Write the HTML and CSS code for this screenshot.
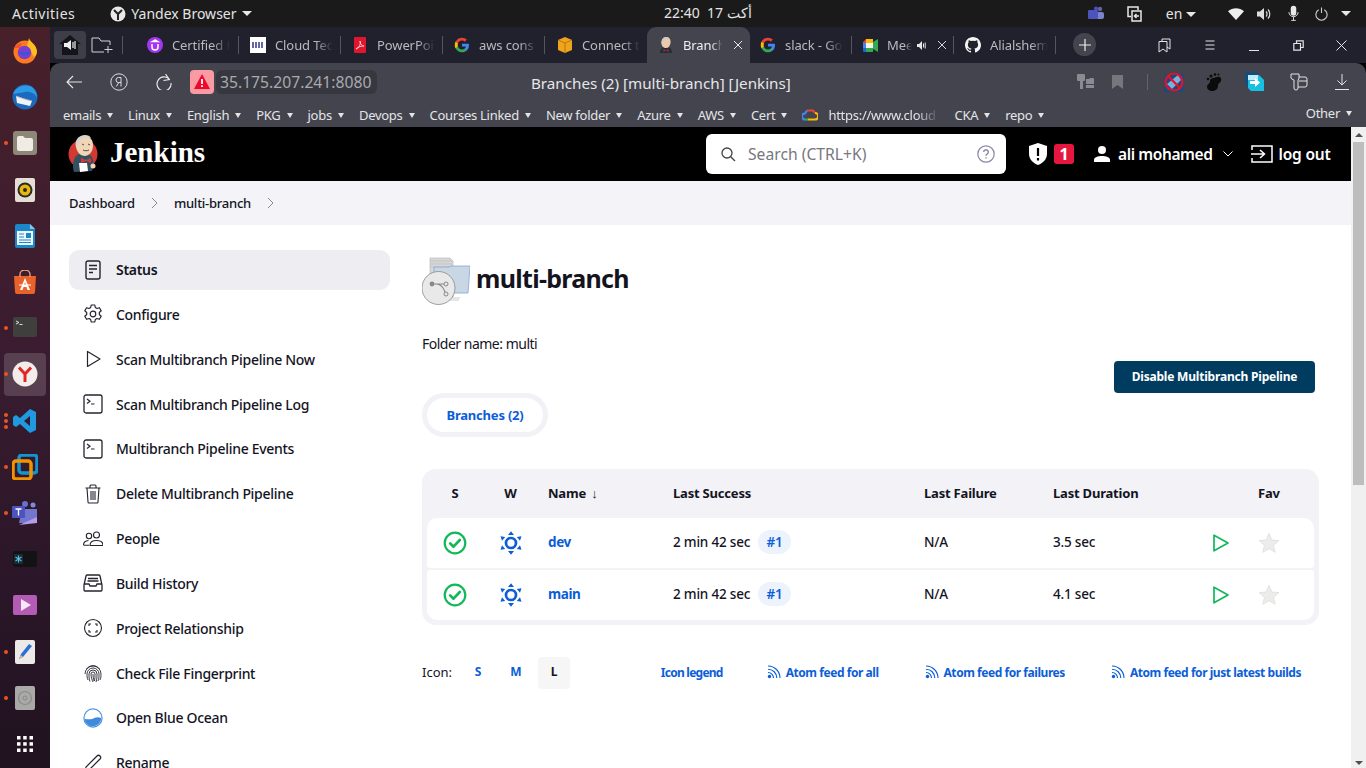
FILE: index.html
```html
<!DOCTYPE html>
<html lang="en">
<head>
    <meta charset="UTF-8">
    <meta name="viewport" content="width=device-width, initial-scale=1.0">
    <title>Branches (2) [multi-branch] [Jenkins]</title>
    <link rel="stylesheet" href="styles.css">
</head>
<body>
    <svg class="defs" width="0" height="0">
        <symbol id="g-logo" viewBox="0 0 48 48">
            <path fill="#4285f4" d="M45 24.500c0-1.600-.1-3.100-.4-4.500H24v8.500h11.800c-.5 2.700-2.100 5-4.400 6.600v5.500h7.100C42.600 36.800 45 31.200 45 24.500z"/>
            <path fill="#34a853" d="M24 46c5.900 0 10.900-2 14.500-5.300l-7.100-5.500c-2 1.300-4.500 2.100-7.400 2.100-5.700 0-10.500-3.800-12.200-9H4.500v5.700C8.100 41.100 15.500 46 24 46z"/>
            <path fill="#fbbc05" d="M11.800 28.300c-.9-2.700-.9-5.800 0-8.500V14H4.500c-3 6-3 13.700 0 19.900l7.300-5.600z"/>
            <path fill="#ea4335" d="M24 10.800c3.200 0 6.100 1.100 8.400 3.300l6.300-6.300C34.900 4.200 29.900 2 24 2 15.500 2 8.100 6.900 4.500 14l7.300 5.700c1.700-5.100 6.500-8.900 12.200-8.900z"/>
        </symbol>
        <symbol id="rss" viewBox="0 0 14 14">
            <circle cx="2.500" cy="11.500" r="1.700" fill="currentColor"/>
            <path d="M1 7.500a5.500 5.500 0 0 1 5.500 5.500M1 4.200A8.800 8.800 0 0 1 9.800 13M1 1a12 12 0 0 1 12 12" fill="none" stroke="currentColor" stroke-width="1.150"/>
        </symbol>
        <symbol id="ok" viewBox="0 0 24 24">
            <circle cx="12" cy="12" r="10.300" fill="none" stroke="#11b85a" stroke-width="2.200"/>
            <path d="M7.200 12.400l3.300 3.300 6.300-6.700" fill="none" stroke="#11b85a" stroke-width="2.700" stroke-linecap="round" stroke-linejoin="round"/>
        </symbol>
        <symbol id="sun" viewBox="0 0 24 24">
            <circle cx="12" cy="12" r="5" fill="none" stroke="#0b5ed8" stroke-width="2.700"/>
            <path fill="#0b5ed8" d="M12 .3l3 3.700H9zM12 23.700L9 20h6zM1.500 5.300l4.700.7L3 9.800zM22.500 5.300l-4.700.7 3.200 3.800zM1.500 18.700L3 14.200 6.200 18zM22.500 18.700L21 14.200 17.800 18z"/>
        </symbol>
        <symbol id="play" viewBox="0 0 18 20">
            <path d="M2 2.200v15.600l14-7.800z" fill="none" stroke="#11b85a" stroke-width="1.700" stroke-linejoin="round"/>
        </symbol>
        <symbol id="star" viewBox="0 0 24 24">
            <path d="M12 1.500l3.100 7.200 7.700.7-5.800 5.200 1.700 7.600-6.700-4-6.700 4L7 14.600 1.200 9.400l7.700-.7z" fill="#ececea" stroke="#dcdcda" stroke-width=".8"/>
        </symbol>
        <symbol id="term" viewBox="0 0 20 20">
            <rect x="1" y="1" width="18" height="18" rx="2" fill="none" stroke="currentColor" stroke-width="1.300"/>
            <path d="M4 5l3 2.300L4 9.500M8 10h3.500" fill="none" stroke="currentColor" stroke-width="1.200"/>
        </symbol>
    </svg>

    <div class="topbar">
        <span class="activities">Activities</span>
        <span class="app-menu">
            <svg width="16" height="16" viewBox="0 0 16 16"><circle cx="8" cy="8" r="7.500" fill="#e8e8e8"/><path d="M4 4l4 4 4-4M8 8v6" stroke="#222" stroke-width="2" fill="none"/></svg>
            Yandex Browser <i class="caret"></i>
        </span>
        <span class="clock">22:40 &nbsp;17 أكت</span>
        <div class="tray">
            <svg class="tray-teams" width="17" height="16" viewBox="0 0 17 16"><circle cx="12" cy="3" r="2.200" fill="#6264a7"/><rect x="8" y="6" width="8" height="7" rx="2" fill="#7b83c9"/><circle cx="8" cy="2.500" r="2" fill="#4b53bc"/><rect x="0" y="4" width="10" height="9" rx="1" fill="#4b53bc"/></svg>
            <svg class="tray-switch" width="15" height="16" viewBox="0 0 15 16"><path d="M4 10.500H1V1h10v3M5 5h9v10H5zM12 10H7.500M9.500 8l-2 2 2 2" fill="none" stroke="#e8e8e8" stroke-width="1.500"/></svg>
            <span class="lang">en <i class="caret"></i></span>
            <svg class="tray-wifi" width="16" height="12" viewBox="0 0 16 12"><path d="M0 3.300C4.500-.8 11.500-.8 16 3.300L8 12z" fill="#eee"/></svg>
            <svg class="tray-vol" width="15" height="14" viewBox="0 0 15 14"><path d="M0 4.500h3L7 1v12L3 9.500H0z" fill="#ddd"/><path d="M9 4.500a3.500 3.500 0 0 1 0 5M11 2.500a6.500 6.500 0 0 1 0 9" fill="none" stroke="#ddd" stroke-width="1.200"/></svg>
            <svg class="tray-mic" width="11" height="17" viewBox="0 0 12 17"><rect x="3" y="0" width="6" height="11" rx="3" fill="#e8e8e8"/><path d="M1 7a5 5 0 0 0 10 0M6 12v4M3.500 16h5" fill="none" stroke="#e8e8e8" stroke-width="1"/></svg>
            <svg class="tray-power" width="13" height="14" viewBox="0 0 14 14"><path d="M4 2.500a6 6 0 1 0 6 0M7 0v6" fill="none" stroke="#ccc" stroke-width="1.200"/></svg>
            <i class="caret"></i>
        </div>
    </div>

    <div class="desktop">
        <div class="dock">
            <div class="dock-item">
                <svg width="26" height="26" viewBox="0 0 26 26"><circle cx="13" cy="14" r="11.500" fill="#ff7a1f"/><path d="M17 0c1 4 7 6 8 13 0 3-1 5-3 6L15 8z" fill="#ffbd1f"/><path d="M2 10c2-3 5-5 8-5l-2 5z" fill="#f4512c"/><circle cx="12.500" cy="14.500" r="6.800" fill="#7a3fd0"/><path d="M7 14a6 4.500 0 0 0 11.500 0z" fill="#3a55d8"/></svg>
            </div>
            <div class="dock-item">
                <svg width="26" height="26" viewBox="0 0 26 26"><circle cx="13" cy="13" r="12.500" fill="#1a6bbd"/><path d="M1 10c3-8 14-11 20-6 3 3 4 6 4 10-2-5-7-7-12-6z" fill="#2c9be6"/><path d="M4 12l16 5-2 5-13-3z" fill="#f2f3f6"/><path d="M4 12l8 3 8 2" fill="none" stroke="#aab" stroke-width=".8"/></svg>
            </div>
            <div class="dock-item running">
                <svg width="24" height="24" viewBox="0 0 24 24"><rect width="24" height="24" rx="3" fill="#8d8779"/><path d="M4 7q0-2 2-2h4l2 2h6q2 0 2 2v9q0 2-2 2H6q-2 0-2-2z" fill="#f0ece4"/></svg>
            </div>
            <div class="dock-item">
                <svg width="22" height="24" viewBox="0 0 22 24"><rect x="0" width="20" height="24" rx="2" fill="#e4dfd4" transform="translate(1)"/><circle cx="11" cy="12" r="7.500" fill="#2a2a26"/><circle cx="11" cy="12" r="5.500" fill="#e9b80f"/><circle cx="11" cy="12" r="2" fill="#2a2a26"/></svg>
            </div>
            <div class="dock-item">
                <svg width="22" height="24" viewBox="0 0 22 24"><path d="M1 2q0-2 2-2h13l5 5v17q0 2-2 2H3q-2 0-2-2z" fill="#1c87c8"/><path d="M3 7h16v14H3z" fill="#eef6fb"/><path d="M16 0l5 5h-5z" fill="#8bc6ea"/><path d="M5 10h5M5 13h5M5 16h12M5 18.500h12" stroke="#1c87c8" stroke-width="1.200"/><rect x="12" y="9" width="5" height="5" fill="#1c87c8"/></svg>
            </div>
            <div class="dock-item">
                <svg width="24" height="24" viewBox="0 0 24 24"><path d="M1 6h22l-1 16q0 2-2 2H4q-2 0-2-2z" fill="#e9622b"/><path d="M7 7V4a5 4 0 0 1 10 0v3" fill="none" stroke="#f2a27d" stroke-width="1.300"/><path d="M12 8l-5 12h2.500l1-3h3l1 3H17zM11.200 15l.8-3 .8 3z" fill="#fff"/><path d="M6 15h12" stroke="#fff"/></svg>
            </div>
            <div class="dock-item running">
                <svg width="24" height="22" viewBox="0 0 24 22"><rect width="24" height="20" rx="2" fill="#3f3f3d"/><path d="M3 4l3 1.500L3 7M6.500 7.500h3" stroke="#ddd" fill="none"/></svg>
            </div>
            <div class="dock-item running active">
                <svg width="26" height="26" viewBox="0 0 26 26"><circle cx="13" cy="13" r="12.500" fill="#f2ecea"/><path d="M7 6.500l6 6.500 6-6.500M13 13v8" stroke="#e22626" stroke-width="3" fill="none"/></svg>
            </div>
            <div class="dock-item running-many">
                <svg width="24" height="24" viewBox="0 0 24 24"><path d="M17 0l6 3v18l-6 3-10-9-4 3-3-2V8l3-2 4 3zM17 7l-6 5 6 5z" fill="#1f9ae0"/></svg>
            </div>
            <div class="dock-item running">
                <svg width="26" height="26" viewBox="0 0 26 26"><rect x="7" y="1" width="18" height="18" rx="3" fill="none" stroke="#1296d2" stroke-width="3.500"/><rect x="1" y="7" width="18" height="18" rx="3" fill="none" stroke="#f39200" stroke-width="3.500"/></svg>
            </div>
            <div class="dock-item running">
                <svg width="26" height="24" viewBox="0 0 26 24"><circle cx="13" cy="3" r="3" fill="#6a6fd0"/><circle cx="21" cy="4" r="2.500" fill="#8288dc"/><path d="M10 8h15v8q-1 5-7 6H7z" fill="#7077cc"/><path d="M7 24l18-8v6z" fill="#b59be8"/><rect y="5" width="13" height="12" rx="1" fill="#4b53bc"/><path d="M3.500 8h6M6.500 8v6.500" stroke="#fff" stroke-width="1.300"/></svg>
            </div>
            <div class="dock-item">
                <svg width="24" height="16" viewBox="0 0 24 16"><rect width="24" height="16" rx="2" fill="#131316"/><rect x="1" y="3" width="9" height="10" fill="#1d2a30"/><path d="M5.500 4.500v7M2.500 6l6 4M8.500 6l-6 4" stroke="#53c0e8" stroke-width="1.100"/></svg>
            </div>
            <div class="dock-item">
                <svg width="24" height="20" viewBox="0 0 24 20"><rect width="24" height="20" rx="2" fill="#b45bb6"/><path d="M8 4v12l10-6z" fill="#f4e8f4"/></svg>
            </div>
            <div class="dock-item running">
                <svg width="20" height="24" viewBox="0 0 20 24"><rect width="20" height="24" rx="2" fill="#eceae6"/><path d="M4 19l2-5 8-10 3 2-9 11z" fill="#2b6fd6"/><path d="M4 19l2-4 2 2z" fill="#e8b88a"/></svg>
            </div>
            <div class="dock-item running">
                <svg width="20" height="24" viewBox="0 0 20 24"><rect width="20" height="24" rx="2" fill="#a9a9a7"/><circle cx="10" cy="12" r="6.500" fill="none" stroke="#8a8a88" stroke-width="1.200"/><circle cx="10" cy="12" r="2" fill="none" stroke="#8a8a88"/></svg>
            </div>
            <div class="dock-item">
                <svg width="16" height="16" viewBox="0 0 16 16" fill="#fff"><rect width="3.500" height="3.500"/><rect x="6.200" width="3.500" height="3.500"/><rect x="12.500" width="3.500" height="3.500"/><rect y="6.200" width="3.500" height="3.500"/><rect x="6.200" y="6.200" width="3.500" height="3.500"/><rect x="12.500" y="6.200" width="3.500" height="3.500"/><rect y="12.500" width="3.500" height="3.500"/><rect x="6.200" y="12.500" width="3.500" height="3.500"/><rect x="12.500" y="12.500" width="3.500" height="3.500"/></svg>
            </div>
        </div>

        <div class="browser">
            <div class="tabstrip">
                <div class="tab-tools">
                    <span class="sound-btn">
                        <svg width="24" height="22" viewBox="0 0 24 22"><path d="M12 1L1 10h3v11h16V10h3z" fill="#14151a"/><path d="M6 9h3l4-3v10l-4-3H6z" fill="#eee"/><path d="M15 8v6M17 7v8" stroke="#eee" stroke-width="1.200"/></svg>
                    </span>
                    <svg class="new-group" width="22" height="16" viewBox="0 0 22 16"><path d="M13 15H1V1h7l2 3h9v4M17 9v7M13.500 12.500h8" fill="none" stroke="#d2d2d6" stroke-width="1"/></svg>
                    <i class="tab-sep"></i>
                </div>
                <div class="tab tab-first">
                    <svg width="16" height="16" viewBox="0 0 16 16"><circle cx="8" cy="8" r="8" fill="#a435f0"/><path d="M5 7v3a3 3 0 0 0 6 0V7M8 3l2.500 1.500h-5z" fill="none" stroke="#fff" stroke-width="1.500"/></svg>
                    <span class="tab-title">Certified K</span>
                </div>
                <div class="tab">
                    <svg width="16" height="16" viewBox="0 0 16 16"><rect width="16" height="16" fill="#fff"/><path d="M2 6h12M2 8h12M2 10h12" stroke="#34348a" stroke-width="1.300" stroke-dasharray="2 1"/></svg>
                    <span class="tab-title">Cloud Tec</span>
                </div>
                <div class="tab">
                    <svg width="16" height="16" viewBox="0 0 16 16"><rect x="2" width="12" height="16" rx="1" fill="#e2152f"/><path d="M4 12c3-1 5-5 4-8 0 3 2 5 4 5-3 0-6 1-8 3z" fill="none" stroke="#fff" stroke-width=".7"/></svg>
                    <span class="tab-title">PowerPoi</span>
                </div>
                <div class="tab">
                    <svg width="16" height="16"><use href="#g-logo"/></svg>
                    <span class="tab-title">aws cons</span>
                </div>
                <div class="tab tab-aws">
                    <svg width="16" height="16" viewBox="0 0 16 16"><path d="M8 0l7 3v10l-7 3-7-3V3z" fill="#f0a41e"/><path d="M1 3l7 3 7-3M8 6v10" stroke="#a86d08" fill="none" stroke-width=".8"/></svg>
                    <span class="tab-title">Connect t</span>
                </div>
                <div class="tab tab-active">
                    <svg width="16" height="16" viewBox="0 0 16 16"><path d="M2 16c0-4 2-6 6-6s6 2 6 6z" fill="#22303a"/><path d="M3.500 6c0-4 2-6 5-6s4.500 3 4 6-2 5-4.500 5-4.500-2-4.500-5z" fill="#ecc8ac"/><path d="M3.500 7C3 3 5 0 8 0c2 0 3 1 3.500 2-3-.5-5 0-6 2-.5 1-1 2-2 3z" fill="#cfcbc6"/><path d="M5.500 12l2.500 1.500L10.500 12v3L8 13.500 5.500 15z" fill="#c41f2b"/></svg>
                    <span class="tab-title">Branch</span>
                    <svg class="tab-close" width="10" height="10" viewBox="0 0 10 10"><path d="M1 1l8 8M9 1l-8 8" stroke="#e8e8ea" stroke-width="1"/></svg>
                </div>
                <div class="tab tab-slack">
                    <svg width="16" height="16"><use href="#g-logo"/></svg>
                    <span class="tab-title">slack - Go</span>
                </div>
                <div class="tab tab-meet">
                    <svg width="15" height="13" viewBox="0 0 15 13"><path d="M3 0h7v4H3z" fill="#fbbc05"/><path d="M0 3l3-3v4H0z" fill="#ea4335"/><path d="M0 4h3v5H0z" fill="#4285f4"/><path d="M0 9h3v4H1q-1 0-1-1z" fill="#1967d2"/><path d="M3 9h7v4H3z" fill="#34a853"/><path d="M10 3l5-3v13l-5-3z" fill="#34a853"/><path d="M3 4h7v5H3z" fill="#fff" opacity=".95"/></svg>
                    <span class="tab-title">Mee</span>
                    <svg class="tab-sound" width="9" height="9" viewBox="0 0 9 9"><path d="M0 3h2l3-3v9L2 6H0z" fill="#e8e8ea"/><path d="M6.500 2.500v4M8.200 1.500v6" stroke="#e8e8ea"/></svg>
                    <svg class="tab-close" width="10" height="10" viewBox="0 0 10 10"><path d="M1 1l8 8M9 1l-8 8" stroke="#d8d8da" stroke-width="1"/></svg>
                </div>
                <div class="tab tab-last">
                    <svg width="16" height="16" viewBox="0 0 16 16"><path fill="#f4f4f4" d="M8 0C3.600 0 0 3.600 0 8c0 3.500 2.300 6.500 5.500 7.600.4.100.5-.2.500-.4v-1.400c-2.200.5-2.700-1.100-2.700-1.100-.4-.9-.9-1.200-.9-1.200-.7-.5.100-.5.100-.5.800.1 1.200.8 1.200.8.700 1.200 1.900.9 2.300.7.100-.5.300-.9.500-1.100-1.800-.2-3.600-.9-3.600-4 0-.9.300-1.600.8-2.100-.1-.2-.4-1 .1-2.100 0 0 .7-.2 2.200.8a7.600 7.600 0 0 1 4 0c1.500-1 2.200-.8 2.200-.8.400 1.100.2 1.900.1 2.100.5.600.8 1.300.8 2.100 0 3.100-1.900 3.700-3.700 3.900.3.300.6.800.6 1.500v2.200c0 .2.100.5.600.4C13.700 14.500 16 11.500 16 8c0-4.400-3.600-8-8-8z"/></svg>
                    <span class="tab-title">Alialshem</span>
                </div>
                <span class="new-tab">
                    <svg width="12" height="12" viewBox="0 0 12 12"><path d="M6 0v12M0 6h12" stroke="#eee" stroke-width="1.200"/></svg>
                </span>
                <div class="win-tools">
                    <svg width="13" height="15" viewBox="0 0 13 15"><path d="M1 3.500h8V14L5 11l-4 3zM4 3.500V1h8v10l-3-2" fill="none" stroke="#e4e4e6" stroke-width="1"/></svg>
                    <svg width="12" height="10" viewBox="0 0 12 10"><path d="M1.500 1h9M1.500 5h9M1.500 9h9" stroke="#e4e4e6" stroke-width="1"/></svg>
                    <svg width="12" height="12" viewBox="0 0 12 12"><path d="M1 11.500h10" stroke="#e4e4e6" stroke-width="1"/></svg>
                    <svg width="11" height="11" viewBox="0 0 11 11"><path d="M3.500 3V.8h6.700v6.700H8M.8 3.500h6.700v6.700H.800z" fill="none" stroke="#e4e4e6" stroke-width="1.200"/></svg>
                    <svg width="11" height="11" viewBox="0 0 11 11"><path d="M.5.500l10 10M10.500.500l-10 10" stroke="#e4e4e6" stroke-width="1"/></svg>
                </div>
            </div>

            <div class="toolbar">
                <div class="nav-btns">
                    <svg width="16" height="14" viewBox="0 0 16 14"><path d="M7 1L1 7l6 6M1 7h15" fill="none" stroke="#e8e8ea" stroke-width="1.100"/></svg>
                    <svg width="18" height="18" viewBox="0 0 18 18"><circle cx="9" cy="9" r="8.200" fill="none" stroke="#dcdce0" stroke-width="1"/><path d="M11 13.500v-9H8.500a2.500 2.500 0 0 0 0 5H11M8.800 9.500L6.300 13.500" fill="none" stroke="#dcdce0" stroke-width="1"/></svg>
                    <svg width="16" height="16" viewBox="0 0 16 16"><path d="M13.500 5.500A7 7 0 1 0 15 9M9.500 0l3.800 5.500-5.800 1" fill="none" stroke="#e8e8ea" stroke-width="1.200"/></svg>
                </div>
                <span class="warn">
                    <svg width="16" height="15" viewBox="0 0 16 15"><path d="M8 0l8 15H0z" fill="#f0082c"/><path d="M8 5v5M8 11.300v1.700" stroke="#fff" stroke-width="1.800"/></svg>
                </span>
                <span class="address">35.175.207.241:8080</span>
                <span class="page-title">Branches (2) [multi-branch] [Jenkins]</span>
                <div class="toolbar-right">
                    <svg class="ic-key" width="17" height="16" viewBox="0 0 17 16"><path d="M0 1q0-1 1-1h6q1 0 1 1v5q0 1-1 1H6v8H3V7H1Q0 7 0 6z" fill="#8a8a90"/><path d="M9 5h3l1-1h3q1 0 1 1v5H9zM9 11h8v3H9z" fill="#8a8a90"/></svg>
                    <svg class="ic-mark" width="11" height="14" viewBox="0 0 11 14"><path d="M0 0h11v14L5.500 10 0 14z" fill="#76767c"/></svg>
                    <i class="toolbar-sep"></i>
                    <svg class="ic-ext1" width="20" height="20" viewBox="0 0 20 20"><rect y="2" width="20" height="18" fill="#1d4a78"/><path d="M3 12L14 3l3 5-9 9z" fill="#7ab0dc"/><circle cx="10" cy="10" r="8.500" fill="none" stroke="#e8102a" stroke-width="2.200"/><path d="M4 4l12 12" stroke="#e8102a" stroke-width="2.200"/></svg>
                    <svg class="ic-ext2" width="16" height="18" viewBox="0 0 16 18"><path d="M11 4c3-1 5 1 4 4-1 2-3 2-3 5 0 3-3 5-6 5-3 0-5-2-5-4 0-3 3-3 3-6s4-3 7-4z" fill="#0b0b0b"/><circle cx="5" cy="3" r="1.500" fill="#0b0b0b"/><circle cx="9" cy="1.500" r="1.300" fill="#0b0b0b"/><circle cx="12.500" cy="1.500" r="1" fill="#0b0b0b"/><circle cx="2" cy="6" r="1.300" fill="#0b0b0b"/></svg>
                    <svg class="ic-ext3" width="19" height="19" viewBox="0 0 19 19"><path d="M0 0h12v3H3v11H0z" fill="#124f7c"/><path d="M3 3h11l5 5v11H6l-3-3z" fill="#18c1e4"/><path d="M3 3h10v5H3z" fill="#bfeefa"/><path d="M5 9h5V6l5 4.500-5 4.500v-3H5z" fill="#fff"/></svg>
                    <svg class="ic-ext4" width="18" height="18" viewBox="0 0 18 18"><path d="M1 1h8v4q0 1-1 2v8q0 2-2 2t-2-2V7Q1 6 1 5zM9 4h6q2 0 2 2v6q0 2-2 2H8" fill="none" stroke="#e4e4e6" stroke-width="1"/><path d="M9 8h8" stroke="#e4e4e6"/></svg>
                    <svg class="ic-down" width="14" height="16" viewBox="0 0 14 16"><path d="M7 0v11M2.500 6.500L7 11l4.500-4.500M0 15.500h14" fill="none" stroke="#e4e4e6" stroke-width="1"/></svg>
                </div>
            </div>

            <div class="bookmarks">
                <span class="bm">emails</span>
                <span class="bm">Linux</span>
                <span class="bm">English</span>
                <span class="bm">PKG</span>
                <span class="bm">jobs</span>
                <span class="bm">Devops</span>
                <span class="bm">Courses Linked</span>
                <span class="bm">New folder</span>
                <span class="bm">Azure</span>
                <span class="bm">AWS</span>
                <span class="bm">Cert</span>
                <span class="bm-link"><svg width="16" height="16" viewBox="0 0 16 16"><path d="M5 3.500h6l2 2.500" fill="none" stroke="#ea4335" stroke-width="2.200"/><path d="M3 12.500a3 3 0 0 1 0-6l2-3" fill="none" stroke="#4285f4" stroke-width="2.200"/><path d="M3 12.500h3" stroke="#34a853" stroke-width="2.200"/><path d="M6 12.500h7a3 3 0 0 0 0-6.500" fill="none" stroke="#fbbc05" stroke-width="2.200"/></svg><span class="bm-url">https://www.cloud</span></span>
                <span class="bm">CKA</span>
                <span class="bm">repo</span>
                <span class="bm bm-other">Other</span>
            </div>

            <div class="viewport">
                <div class="jenkins">
                    <header class="jk-header">
                        <div class="jk-brand">
                            <svg width="32" height="38" viewBox="0 0 32 38">
                                <circle cx="15" cy="19" r="14.500" fill="#d33833"/>
                                <path d="M6 37c-2-5-1-14 3-17 4-2 11-2 14 1 3 3 3 10 1 15z" fill="#335061"/>
                                <path d="M8 12C7 5 12 1 17 1c5 0 8 4 8 9 0 5-2 10-8 11-5 0-8-4-9-9z" fill="#f0d6b7"/>
                                <path d="M8 12C6 5 11 0 17 0c3 0 5 1 6 3-5-1-9 0-11 3-1 2-2 4-4 6z" fill="#d9d3cc"/>
                                <path d="M14 9l2 1M20 9l2 1M15 15c2 1 4 1 6 0" stroke="#49382b" stroke-width=".9" fill="none"/>
                                <path d="M13 23l5 2 5-2v5l-5-2-5 2z" fill="#d33833"/>
                                <path d="M12 37l-1-9h8l1 8z" fill="#fff"/>
                                <circle cx="25" cy="31" r="2.500" fill="#f0d6b7"/>
                            </svg>
                            <span class="jk-name">Jenkins</span>
                        </div>
                        <div class="jk-search">
                            <svg width="16" height="16" viewBox="0 0 16 16"><circle cx="7" cy="7" r="5" fill="none" stroke="#444" stroke-width="1.300"/><path d="M10.700 10.700L15 15" stroke="#444" stroke-width="1.300"/></svg>
                            <span class="jk-placeholder">Search (CTRL+K)</span>
                            <svg class="jk-help" width="18" height="18" viewBox="0 0 18 18"><circle cx="9" cy="9" r="8.200" fill="none" stroke="#8885a8" stroke-width="1.200"/><path d="M6.700 7a2.300 2.300 0 1 1 3.500 2c-.8.500-1.200.9-1.200 1.800M9 12.300v1.300" fill="none" stroke="#8885a8" stroke-width="1.400"/></svg>
                        </div>
                        <div class="jk-alert">
                            <svg width="18" height="22" viewBox="0 0 18 22"><path d="M9 0l9 3v8c0 5-4 9-9 11-5-2-9-6-9-11V3z" fill="#fff"/><path d="M9 5v8M9 15v2.500" stroke="#000" stroke-width="2.200"/></svg>
                            <span class="jk-badge">1</span>
                        </div>
                        <div class="jk-user">
                            <svg width="16" height="16" viewBox="0 0 16 16"><circle cx="8" cy="4" r="4" fill="#fff"/><path d="M0 16v-2c0-3 4-4 8-4s8 1 8 4v2z" fill="#fff"/></svg>
                            <span>ali mohamed</span>
                            <svg class="jk-chev" width="10" height="6" viewBox="0 0 10 6"><path d="M.5.500L5 5 9.500.500" fill="none" stroke="#fff" stroke-width="1"/></svg>
                        </div>
                        <div class="jk-logout">
                            <svg width="22" height="18" viewBox="0 0 22 18"><path d="M1 5V1h20v16H1v-4M0 9h13M9 5l4.500 4L9 13" fill="none" stroke="#fff" stroke-width="1.500"/></svg>
                            <span>log out</span>
                        </div>
                    </header>

                    <nav class="breadcrumb">
                        <span>Dashboard</span>
                        <svg width="7" height="12" viewBox="0 0 7 12"><path d="M1 1l5 5-5 5" fill="none" stroke="#8a8a90" stroke-width="1"/></svg>
                        <span>multi-branch</span>
                        <svg width="7" height="12" viewBox="0 0 7 12"><path d="M1 1l5 5-5 5" fill="none" stroke="#8a8a90" stroke-width="1"/></svg>
                    </nav>

                    <div class="jk-body">
                        <aside class="side">
                            <a class="side-item side-active">
                                <svg width="20" height="20" viewBox="0 0 20 20"><rect x="3" y="1" width="14" height="18" rx="2" fill="none" stroke="currentColor" stroke-width="1.400"/><path d="M6 5.500h8M6 9h8M6 12.500h4" stroke="currentColor" stroke-width="1.300"/></svg>
                                Status
                            </a>
                            <a class="side-item">
                                <svg width="20" height="20" viewBox="0 0 20 20"><path d="M8.200 1h3.600l.5 2.500 1.700 1 2.400-.8 1.800 3.100-1.900 1.700v2l1.900 1.700-1.800 3.100-2.400-.8-1.700 1-.5 2.500H8.200l-.5-2.500-1.700-1-2.400.8-1.800-3.100 1.900-1.700v-2L1.800 6.800l1.800-3.100 2.400.8 1.700-1z" fill="none" stroke="currentColor" stroke-width="1.200" stroke-linejoin="round"/><circle cx="10" cy="10" r="2.800" fill="none" stroke="currentColor" stroke-width="1.200"/></svg>
                                Configure
                            </a>
                            <a class="side-item">
                                <svg width="20" height="20" viewBox="0 0 20 20"><path d="M4.500 2.500v15L17 10z" fill="none" stroke="currentColor" stroke-width="1.200" stroke-linejoin="round"/></svg>
                                Scan Multibranch Pipeline Now
                            </a>
                            <a class="side-item">
                                <svg width="20" height="20"><use href="#term"/></svg>
                                Scan Multibranch Pipeline Log
                            </a>
                            <a class="side-item">
                                <svg width="20" height="20"><use href="#term"/></svg>
                                Multibranch Pipeline Events
                            </a>
                            <a class="side-item">
                                <svg width="20" height="20" viewBox="0 0 20 20"><path d="M2.500 4h15M7 4V2q0-1 1-1h4q1 0 1 1v2M4 4l1 14q0 1 1 1h8q1 0 1-1l1-14M8 7v9M10 7v9M12 7v9" fill="none" stroke="currentColor" stroke-width="1.100"/></svg>
                                Delete Multibranch Pipeline
                            </a>
                            <a class="side-item">
                                <svg width="20" height="20" viewBox="0 0 20 20"><circle cx="6" cy="7" r="2.700" fill="none" stroke="currentColor" stroke-width="1.100"/><circle cx="13.500" cy="6" r="3" fill="none" stroke="currentColor" stroke-width="1.100"/><path d="M.5 16q0-4 5-4.500M7 16.500q0-5 6.500-5t6.500 5zM.5 16.300H6" fill="none" stroke="currentColor" stroke-width="1.100"/></svg>
                                People
                            </a>
                            <a class="side-item">
                                <svg width="20" height="20" viewBox="0 0 20 20"><path d="M1 12l2-9q.2-1 1-1h12q.8 0 1 1l2 9v5q0 1-1 1H2q-1 0-1-1zM1 11h5l1 2h6l1-2h5M5 5.500h10M4.500 8h11" fill="none" stroke="currentColor" stroke-width="1.300"/></svg>
                                Build History
                            </a>
                            <a class="side-item">
                                <svg width="20" height="20" viewBox="0 0 20 20"><circle cx="10" cy="10" r="8.500" fill="none" stroke="currentColor" stroke-width="1.100"/><path d="M6 8V6h2M12 6h2v2M14 12v2h-2M8 14H6v-2" fill="none" stroke="currentColor" stroke-width="1.100"/></svg>
                                Project Relationship
                            </a>
                            <a class="side-item">
                                <svg width="20" height="20" viewBox="0 0 20 20"><path d="M3.500 6a8 8 0 0 1 13 0M2 11a8 8 0 0 1 16 0c0 2 0 4-1 6M5 17c-1-2-1-4-1-6a6 6 0 0 1 12 0c0 3 0 5-1 7M7 18.500c-1-2-1-5-1-7.500a4 4 0 0 1 8 0c0 3 0 5-1 8M10 19c-1-2-2-5-2-8a2 2 0 0 1 4 0c0 2 0 5-.5 7M10 11c0 3 .5 5 1 7" fill="none" stroke="currentColor" stroke-width=".9"/></svg>
                                Check File Fingerprint
                            </a>
                            <a class="side-item">
                                <svg width="22" height="22" viewBox="0 0 22 22"><circle cx="11" cy="11" r="10" fill="#fff" stroke="#4a90e2" stroke-width="1.300"/><path d="M2 12c3 0 5 1 8 0 3-1 5-3 10-1 0 5-4 9-9 9s-9-4-9-8z" fill="#3e8bdc"/></svg>
                                Open Blue Ocean
                            </a>
                            <a class="side-item">
                                <svg width="20" height="20" viewBox="0 0 20 20"><path d="M2 18l1-4L14 3q1.500-1.500 3 0t0 3L6 17z" fill="none" stroke="currentColor" stroke-width="1.200"/></svg>
                                Rename
                            </a>
                        </aside>

                        <main class="content">
                            <div class="title-row">
                                <svg width="48" height="48" viewBox="0 0 48 48">
                                    <path d="M8 1h20l3 3v36H8z" fill="#d8d8d8" stroke="#bbb" stroke-width=".7"/>
                                    <path d="M8 4h22M8 7h22M8 10h22" stroke="#bcbcbc" stroke-width=".7"/>
                                    <path d="M12 10h15l2-1h19l-2 27H12z" fill="#c9d6e4" stroke="#86a6cf" stroke-width=".8"/>
                                    <path d="M12 41h26M12 43h25" stroke="#ccc"/>
                                    <circle cx="16.500" cy="31" r="16.500" fill="#e9e9e9" stroke="#888" stroke-width=".8"/>
                                    <path d="M10 27h12M14 27c4 0 7 2 9 8" fill="none" stroke="#8a8a8a" stroke-width="1.200"/>
                                    <circle cx="10" cy="27" r="2.400" fill="#888"/>
                                    <circle cx="24" cy="27" r="2" fill="#e9e9e9" stroke="#888"/>
                                    <circle cx="24" cy="37" r="2" fill="#e9e9e9" stroke="#888"/>
                                </svg>
                                <h1>multi-branch</h1>
                            </div>
                            <div class="folder-name">Folder name: multi</div>
                            <div class="actions">
                                <button class="disable-btn">Disable Multibranch Pipeline</button>
                            </div>
                            <div class="tabs-pill"><span>Branches (2)</span></div>

                            <div class="table">
                                <div class="t-head">
                                    <span class="t-center">S</span>
                                    <span class="t-center">W</span>
                                    <span class="t-name">Name <em>↓</em></span>
                                    <span>Last Success</span>
                                    <span>Last Failure</span>
                                    <span>Last Duration</span>
                                    <span></span>
                                    <span class="t-fav">Fav</span>
                                </div>
                                <div class="t-row">
                                    <span class="t-icon"><svg width="24" height="24"><use href="#ok"/></svg></span>
                                    <span class="t-icon"><svg width="24" height="24"><use href="#sun"/></svg></span>
                                    <a class="t-name t-link">dev</a>
                                    <span>2 min 42 sec <b class="build">#1</b></span>
                                    <span>N/A</span>
                                    <span>3.5 sec</span>
                                    <span class="t-run"><svg width="18" height="20"><use href="#play"/></svg></span>
                                    <span class="t-star"><svg width="22" height="22"><use href="#star"/></svg></span>
                                </div>
                                <div class="t-row">
                                    <span class="t-icon"><svg width="24" height="24"><use href="#ok"/></svg></span>
                                    <span class="t-icon"><svg width="24" height="24"><use href="#sun"/></svg></span>
                                    <a class="t-name t-link">main</a>
                                    <span>2 min 42 sec <b class="build">#1</b></span>
                                    <span>N/A</span>
                                    <span>4.1 sec</span>
                                    <span class="t-run"><svg width="18" height="20"><use href="#play"/></svg></span>
                                    <span class="t-star"><svg width="22" height="22"><use href="#star"/></svg></span>
                                </div>
                            </div>

                            <div class="foot">
                                <span class="foot-label">Icon:</span>
                                <a class="size">S</a>
                                <a class="size">M</a>
                                <a class="size size-on">L</a>
                                <div class="foot-links">
                                    <a class="legend">Icon legend</a>
                                    <a><svg width="14" height="14"><use href="#rss"/></svg>Atom feed for all</a>
                                    <a><svg width="14" height="14"><use href="#rss"/></svg>Atom feed for failures</a>
                                    <a><svg width="14" height="14"><use href="#rss"/></svg>Atom feed for just latest builds</a>
                                </div>
                            </div>
                        </main>
                    </div>
                </div>
                <div class="scrollbar">
                    <span class="scroll-up"></span>
                    <span class="scroll-thumb"></span>
                    <span class="scroll-down"></span>
                </div>
            </div>
        </div>
    </div>
</body>
</html>
```

FILE: styles.css
```css
* {
    box-sizing: border-box;
}

html, body {
    height: 100%;
}

body {
    margin: 0;
    overflow: hidden;
    display: flex;
    flex-direction: column;
    font-family: "Noto Sans", "Open Sans", sans-serif;
    background: #000;
}

.defs {
    position: absolute;
}

.caret {
    display: inline-block;
    width: 0;
    height: 0;
    border-left: 5px solid transparent;
    border-right: 5px solid transparent;
    border-top: 5px solid #e8e8e8;
    vertical-align: 2px;
}

/* ubuntu top bar */
.topbar {
    height: 27px;
    flex: none;
    display: flex;
    align-items: center;
    background: #1a1a1a;
    color: #e4e4e4;
    font-size: 14px;
    position: relative;
    padding-left: 12px;
}

.activities {
    letter-spacing: 0.5px;
}

.app-menu {
    display: flex;
    align-items: center;
    gap: 5px;
    margin-left: 35px;
}

.clock {
    position: absolute;
    left: 664px;
    top: 3px;
    white-space: nowrap;
}

.tray {
    margin-left: auto;
    display: flex;
    align-items: center;
    padding-right: 15px;
    height: 100%;
}

.tray-teams { margin-right: 22px; }
.tray-switch { margin-right: 24px; }
.lang { margin-right: 32px; }
.tray-wifi { margin-right: 13px; }
.tray-vol { margin-right: 16px; }
.tray-mic { margin-right: 16px; }
.tray-power { margin-right: 13px; }

.desktop {
    flex: 1;
    display: flex;
    min-height: 0;
}

/* launcher */
.dock {
    width: 50px;
    flex: none;
    display: flex;
    flex-direction: column;
    background: linear-gradient(180deg, #47202a 0%, #3a1c30 45%, #2a1628 75%, #211320 100%);
    padding-top: 1px;
}

.dock-item {
    height: 46.2px;
    flex: none;
    display: flex;
    align-items: center;
    justify-content: center;
    position: relative;
}

.dock-item.active::after {
    content: "";
    position: absolute;
    left: 4px;
    right: 4px;
    top: 2px;
    bottom: 2px;
    border-radius: 4px;
    background: rgba(255, 255, 255, 0.16);
}

.dock-item svg {
    position: relative;
    z-index: 1;
}

.running::before,
.running-many::before {
    content: "";
    position: absolute;
    left: 4px;
    top: 50%;
    width: 4px;
    height: 4px;
    margin-top: -2px;
    border-radius: 50%;
    background: #e95420;
    z-index: 2;
}

.running-many::before {
    box-shadow: 0 -6px 0 #e95420, 0 6px 0 #e95420;
}

.browser {
    flex: 1;
    min-width: 0;
    display: flex;
    flex-direction: column;
}

/* tabs */
.tabstrip {
    height: 36px;
    flex: none;
    display: flex;
    background: #20212c;
    color: #b9b9bf;
    font-size: 13px;
    padding-left: 4px;
}

.tab-tools {
    display: flex;
    align-items: center;
    width: 73px;
    flex: none;
}

.sound-btn {
    width: 32px;
    height: 28px;
    border-radius: 4px;
    background: #3d3e48;
    display: flex;
    align-items: center;
    justify-content: center;
}

.new-group {
    margin-left: 5px;
}

.tab-sep {
    width: 1px;
    height: 18px;
    background: #55565f;
    margin-left: 9px;
}

.tab {
    width: 102px;
    flex: none;
    display: flex;
    align-items: center;
    gap: 9px;
    padding-left: 11px;
    position: relative;
}

.tab::after {
    content: "";
    position: absolute;
    right: 0;
    top: 9px;
    height: 18px;
    width: 1px;
    background: #55565f;
}

.tab svg {
    flex: none;
}

.tab-first {
    width: 112px;
    padding-left: 20px;
}

.tab-aws {
    padding-left: 12px;
}

.tab-aws::after,
.tab-active::after {
    display: none;
}

.tab-title {
    width: 58px;
    white-space: nowrap;
    overflow: hidden;
    flex: none;
    letter-spacing: -0.1px;
    -webkit-mask-image: linear-gradient(90deg, #000 70%, transparent 100%);
    mask-image: linear-gradient(90deg, #000 70%, transparent 100%);
}

.tab-active {
    background: #43444e;
    border-radius: 9px 9px 0 0;
    color: #eeeeef;
    width: 103px;
}

.tab-active .tab-title {
    width: 40px;
}

.tab-close {
    margin-left: 1px;
}

.tab-meet .tab-title {
    width: 25px;
}

.tab-meet .tab-sound {
    margin-left: -4px;
}

.tab-meet .tab-close {
    margin-left: 2px;
}

.tab-slack {
    padding-left: 10px;
}

.new-tab {
    width: 23px;
    height: 23px;
    border-radius: 50%;
    background: #43444e;
    margin: 6px 0 0 17px;
    display: flex;
    align-items: center;
    justify-content: center;
    flex: none;
}

.win-tools {
    margin-left: auto;
    display: flex;
    align-items: center;
    gap: 32.500px;
    padding-right: 19px;
}

.toolbar {
    height: 37px;
    flex: none;
    display: flex;
    align-items: center;
    background: #43444e;
    border-radius: 10px 10px 0 0;
    position: relative;
    padding-left: 16px;
}

.nav-btns {
    display: flex;
    align-items: center;
    gap: 28px;
}

.warn {
    width: 24px;
    height: 24px;
    margin-left: 18px;
    background: #fa9aa3;
    border-radius: 4px;
    display: flex;
    align-items: center;
    justify-content: center;
}

.address {
    width: 161px;
    height: 24px;
    line-height: 24px;
    margin-left: 2px;
    padding-left: 4px;
    border-radius: 6px;
    background: #37383f;
    color: #a9a9af;
    font-size: 15.700px;
    white-space: nowrap;
}

.page-title {
    position: absolute;
    left: 481px;
    top: 10px;
    color: #e6e6e8;
    font-size: 15.200px;
    white-space: nowrap;
}

.toolbar-right {
    margin-left: auto;
    display: flex;
    align-items: center;
    padding-right: 17px;
}

.ic-mark { margin-left: 18px; }
.toolbar-sep { width: 1px; height: 16px; background: #62636c; margin-left: 24px; }
.ic-ext1 { margin-left: 16px; }
.ic-ext2 { margin-left: 22px; }
.ic-ext3 { margin-left: 23px; }
.ic-ext4 { margin-left: 26px; }
.ic-down { margin-left: 27px; }

/* bookmarks */
.bookmarks {
    height: 27px;
    flex: none;
    display: flex;
    align-items: center;
    gap: 15px;
    background: #43444e;
    color: #e4e4e6;
    font-size: 13px;
    letter-spacing: -0.27px;
    padding: 2px 14px 0 13px;
    white-space: nowrap;
}

.bm::after {
    content: "";
    display: inline-block;
    width: 0;
    height: 0;
    border-left: 3.5px solid transparent;
    border-right: 3.5px solid transparent;
    border-top: 5px solid #e4e4e6;
    margin-left: 6px;
    vertical-align: 2px;
}

.bm-link {
    display: flex;
    align-items: center;
    gap: 10px;
}

.bm-url {
    width: 111px;
    overflow: hidden;
    -webkit-mask-image: linear-gradient(90deg, #000 80%, transparent 100%);
    mask-image: linear-gradient(90deg, #000 80%, transparent 100%);
}

.bm-other {
    margin-left: auto;
    margin-top: -3px;
}

/* jenkins page */
.viewport {
    flex: 1;
    min-height: 0;
    display: flex;
    background: #fff;
}

.jenkins {
    flex: 1;
    min-width: 0;
    display: flex;
    flex-direction: column;
    color: #14141f;
}

.scrollbar {
    width: 15px;
    flex: none;
    padding: 0 2px;
    background: #f0f0f0;
    display: flex;
    flex-direction: column;
    align-items: center;
}

.scroll-up,
.scroll-down {
    width: 0;
    height: 0;
    border-left: 4px solid transparent;
    border-right: 4px solid transparent;
}

.scroll-up {
    margin: 6px 0 5px;
    border-bottom: 4px solid #505050;
}

.scroll-down {
    margin-top: auto;
    margin-bottom: 3px;
    border-top: 4px solid #505050;
}

.scroll-thumb {
    width: 100%;
    height: 343px;
    background: #bdbdbd;
}

.jk-header {
    height: 54px;
    flex: none;
    display: flex;
    align-items: center;
    background: #000;
    color: #fff;
    padding-left: 18px;
}

.jk-brand {
    display: flex;
    align-items: center;
    gap: 10px;
    width: 638px;
    flex: none;
}

.jk-name {
    font-family: "Liberation Serif", serif;
    font-size: 29px;
    font-weight: 700;
    padding-bottom: 4px;
}

.jk-search {
    width: 300px;
    height: 40px;
    flex: none;
    display: flex;
    align-items: center;
    background: #fff;
    border-radius: 6px;
    padding: 0 11px 0 14px;
}

.jk-placeholder {
    margin-left: 12px;
    color: #77777f;
    font-size: 15.700px;
}

.jk-help {
    margin-left: auto;
}

.jk-alert {
    display: flex;
    align-items: center;
    gap: 7px;
    margin-left: 23px;
}

.jk-badge {
    width: 20px;
    height: 20px;
    border-radius: 3px;
    background: #e6173f;
    font-size: 16px;
    font-weight: 700;
    line-height: 20px;
    text-align: center;
}

.jk-user {
    display: flex;
    align-items: center;
    gap: 8px;
    margin-left: 20px;
    font-size: 15.500px;
    font-weight: 600;
    letter-spacing: -0.4px;
}

.jk-chev {
    margin-left: 2px;
}

.jk-logout {
    display: flex;
    align-items: center;
    gap: 6px;
    margin-left: 18px;
    font-size: 15.500px;
    font-weight: 600;
    letter-spacing: -0.2px;
}

.breadcrumb {
    height: 44px;
    flex: none;
    display: flex;
    align-items: center;
    gap: 16px;
    padding-left: 19px;
    background: #f3f3f8;
    font-size: 13px;
    font-weight: 500;
    letter-spacing: -0.25px;
}

.jk-body {
    flex: 1;
    min-height: 0;
    display: flex;
    overflow: hidden;
}

.side {
    width: 340px;
    flex: none;
    padding: 25px 0 0 19px;
    display: flex;
    flex-direction: column;
    gap: 4.850px;
}

.side-item {
    height: 40px;
    flex: none;
    display: flex;
    align-items: center;
    gap: 13px;
    padding: 0 0 1px 14px;
    border-radius: 10px;
    font-size: 14px;
    font-weight: 500;
    letter-spacing: -0.3px;
    color: #14141f;
}

.side-item svg {
    flex: none;
    width: 20px;
    color: #24242e;
}

.side-active {
    background: #ededf2;
    font-weight: 600;
}

.content {
    flex: 1;
    min-width: 0;
    margin-left: 32px;
    padding: 32px 32px 0 0;
}

.title-row {
    display: flex;
    align-items: center;
    gap: 6px;
    height: 48px;
}

h1 {
    margin: 0 0 6px;
    font-size: 25px;
    font-weight: 700;
    letter-spacing: -0.7px;
}

.folder-name {
    margin-top: 29px;
    font-size: 14px;
    line-height: 20px;
    letter-spacing: -0.5px;
}

.actions {
    display: flex;
    justify-content: flex-end;
    margin-top: 7px;
    padding-right: 4px;
}

.disable-btn {
    width: 201px;
    height: 32px;
    border: none;
    border-radius: 4px;
    padding: 0 0 2px;
    background: #003c60;
    color: #fff;
    font-family: inherit;
    font-size: 12px;
    font-weight: 700;
    letter-spacing: -0.2px;
}

.tabs-pill {
    width: 126px;
    height: 44px;
    border: 5px solid #f1f1f6;
    border-radius: 22px;
    display: flex;
    align-items: center;
    justify-content: center;
    color: #0b5ed8;
    font-size: 13px;
    font-weight: 700;
    letter-spacing: -0.2px;
}

.table {
    margin-top: 32px;
    background: #f2f2f7;
    border-radius: 14px;
    padding: 0 5px 5px;
    font-size: 13.500px;
    letter-spacing: -0.2px;
}

.t-head,
.t-row {
    display: grid;
    grid-template-columns: 56px 55px 125px 251px 129px 153px 48px 70px;
    align-items: center;
}

.t-head {
    height: 49px;
    font-size: 13px;
    font-weight: 700;
}

.t-row {
    height: 50px;
    background: #fff;
    margin-bottom: 2px;
    font-weight: 500;
    border-radius: 10px 10px 3px 3px;
}

.t-row:last-child {
    margin-bottom: 0;
    border-radius: 3px 3px 10px 10px;
}

.t-head > span,
.t-row > span,
.t-row > a {
    padding: 0 0 2px 10px;
}

.t-head .t-center {
    padding-left: 0;
    text-align: center;
}

.t-row .t-icon {
    padding: 0;
    text-align: center;
    line-height: 0;
}

.t-name em {
    font-style: normal;
    font-weight: 400;
    margin-left: 2px;
}

.t-row .t-link {
    color: #0b5ed8;
    font-weight: 700;
    letter-spacing: -0.4px;
}

.build {
    display: inline-block;
    margin-left: 5px;
    padding: 0 8px;
    height: 24px;
    line-height: 24px;
    border-radius: 12px;
    background: #edf3fd;
    color: #0b5ed8;
    font-weight: 600;
}

.t-row .t-run,
.t-row .t-star {
    line-height: 0;
    padding-bottom: 0;
}

.t-row .t-run {
    padding-left: 16px;
}

.t-row .t-star {
    padding-left: 14px;
}

.t-head .t-fav {
    padding-left: 14px;
}

.foot {
    display: flex;
    align-items: center;
    margin-top: 32px;
    font-size: 12px;
    font-weight: 700;
    color: #0b5ed8;
}

.foot-label {
    width: 40px;
    padding-bottom: 2px;
    font-size: 13px;
    font-weight: 400;
    color: #14141f;
}

.size {
    width: 32px;
    height: 32px;
    line-height: 30px;
    text-align: center;
    margin-right: 6px;
    border-radius: 4px;
}

.size-on {
    background: #f6f6f6;
    color: #14141f;
}

.foot-links {
    margin-left: auto;
    display: flex;
    gap: 46px;
    padding: 0 18px 2px 0;
    letter-spacing: -0.45px;
}

.foot-links a {
    display: flex;
    align-items: center;
    gap: 5px;
}

.foot-links .legend {
    letter-spacing: -0.75px;
    margin-right: -2px;
}
```
